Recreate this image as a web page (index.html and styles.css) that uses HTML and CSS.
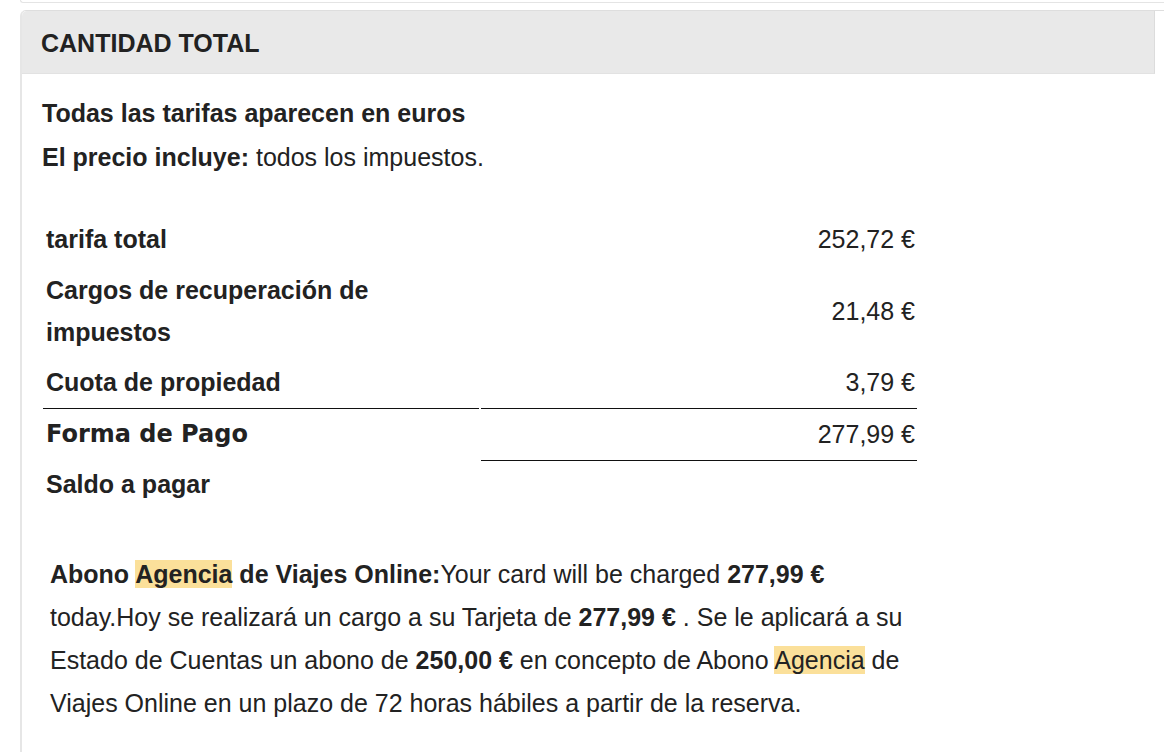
FILE: index.html
```html
<!DOCTYPE html>
<html lang="es">
<head>
<meta charset="utf-8">
<title>Cantidad total</title>
<link rel="stylesheet" href="styles.css">
</head>
<body>
<div class="prev-box"></div>
<section class="panel">
  <div class="panel-header">CANTIDAD TOTAL</div>
  <div class="panel-body">
    <p class="intro strong">Todas las tarifas aparecen en euros</p>
    <p class="intro"><b>El precio incluye:</b> todos los impuestos.</p>
    <table class="rates">
      <tbody>
        <tr>
          <td class="label">tarifa total</td>
          <td class="amount">252,72 €</td>
        </tr>
        <tr class="multi">
          <td class="label">Cargos de recuperación de impuestos</td>
          <td class="amount">21,48 €</td>
        </tr>
        <tr>
          <td class="label">Cuota de propiedad</td>
          <td class="amount">3,79 €</td>
        </tr>
        <tr class="total">
          <td class="label pay">Forma de Pago</td>
          <td class="amount">277,99 €</td>
        </tr>
        <tr class="balance">
          <td class="label">Saldo a pagar</td>
          <td class="amount"></td>
        </tr>
      </tbody>
    </table>
    <p class="note"><b>Abono <mark>Agencia</mark> de Viajes Online:</b>Your card will be charged <b>277,99 €</b> today.Hoy se realizará un cargo a su Tarjeta de <b>277,99 €</b> . Se le aplicará a su Estado de Cuentas un abono de <b>250,00 €</b> en concepto de Abono <mark>Agencia</mark> de Viajes Online en un plazo de 72 horas hábiles a partir de la reserva.</p>
  </div>
</section>
</body>
</html>
```

FILE: styles.css
```css
html, body {
  margin: 0;
  padding: 0;
  background: #ffffff;
}

body {
  width: 1164px;
  height: 752px;
  overflow: hidden;
  font-family: "Liberation Sans", Arial, sans-serif;
  font-size: 25px;
  color: #222222;
}

.prev-box {
  margin-left: 20px;
  height: 2px;
  border-left: 1px solid #e4e4e4;
  border-bottom: 1px solid #e4e4e4;
  border-bottom-left-radius: 6px;
}

.panel {
  margin-top: 7px;
  margin-left: 20px;
  border-left: 2px solid #e6e6e6;
  border-top: 1px solid #dedede;
  border-top-left-radius: 6px;
  min-height: 760px;
}

.panel-header {
  width: 1113px;
  height: 59px;
  padding-top: 3px;
  display: flex;
  align-items: center;
  padding-left: 19px;
  background: #e9e9e9;
  border-right: 1px solid #dcdcdc;
  border-bottom: 1px solid #e2e2e2;
  border-top-left-radius: 5px;
  font-weight: bold;
  color: #222222;
}

.panel-body {
  width: 878px;
  padding-left: 20px;
  padding-top: 17px;
}

.intro {
  margin: 0;
  line-height: 44px;
}

.intro.strong {
  font-weight: bold;
}

.rates {
  margin-top: 34px;
  margin-left: -1px;
  width: 878px;
  table-layout: fixed;
  border-collapse: separate;
  border-spacing: 2px 1px;
}

.rates td {
  padding: 4px 2px 4px 3px;
  line-height: 42px;
  vertical-align: middle;
}

.rates .multi td {
  padding-bottom: 3px;
}

.rates .label {
  font-weight: bold;
}

.rates .amount {
  text-align: right;
}

.rates .total td {
  border-top: 1px solid #111111;
}

.rates .label.pay {
  font-family: "DejaVu Sans", Verdana, sans-serif;
  font-weight: bold;
  font-size: 24px;
}

.rates .balance td {
  padding-top: 3px;
}

.rates .balance .amount {
  border-top: 1px solid #111111;
}

.note {
  margin: 43px 0 0 0;
  padding-left: 8px;
  line-height: 43px;
}

mark {
  background: #fbe09a;
  color: inherit;
}
```
